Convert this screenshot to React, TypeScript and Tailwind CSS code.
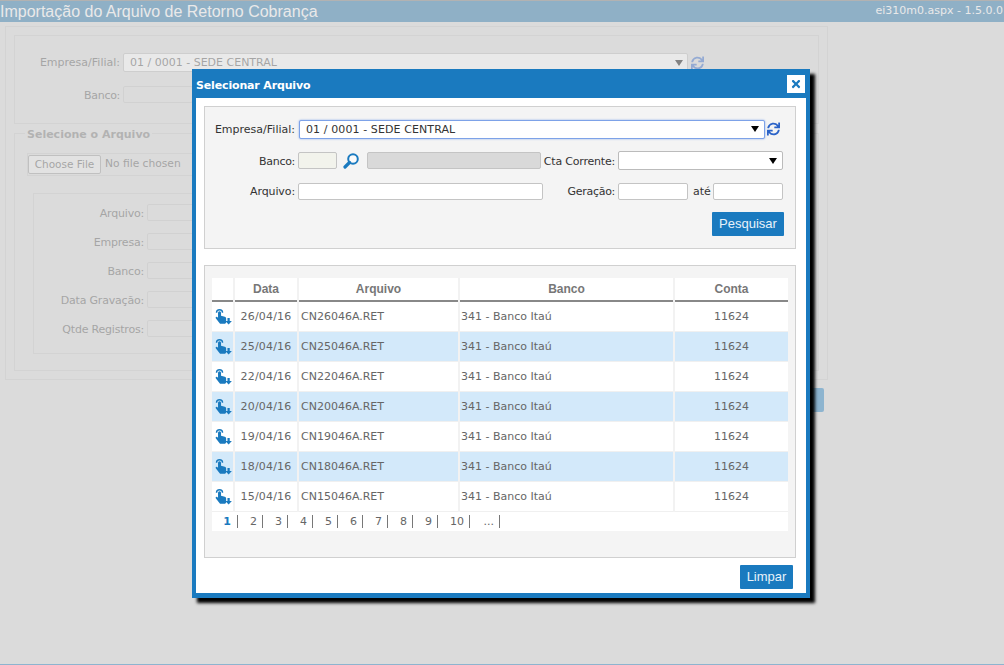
import { FaSync, FaTimes } from "react-icons/fa";

const rows = [
  { data: "26/04/16", arquivo: "CN26046A.RET" },
  { data: "25/04/16", arquivo: "CN25046A.RET" },
  { data: "22/04/16", arquivo: "CN22046A.RET" },
  { data: "20/04/16", arquivo: "CN20046A.RET" },
  { data: "19/04/16", arquivo: "CN19046A.RET" },
  { data: "18/04/16", arquivo: "CN18046A.RET" },
  { data: "15/04/16", arquivo: "CN15046A.RET" },
];

const pages = ["1", "2", "3", "4", "5", "6", "7", "8", "9", "10", "..."];

const caret = "w-0 h-0 border-x-[4px] border-x-transparent border-t-[6px] border-t-black";

function HandIcon() {
  return (
    <svg viewBox="0 0 18 18" className="w-[17px] h-[17px] block" fill="#1a7abf">
      <path d="M1.600 5a3.200 3.200 0 0 1 6.400 0" fill="none" stroke="#1a7abf" strokeWidth="1.500" />
      <path d="M3.200 5a1.600 1.600 0 0 1 3.200 0v3.100l4 1.200c.9 .3 1.400 1 1.400 2v3.500c0 1.200-.8 2-2 2H6.300c-.7 0-1.200-.3-1.600-.9L.8 10.900c-.5-.9.5-2.100 1.500-1.400l.9 .7z" />
      <path d="M13.200 10.500h2.400v3.200h2.300l-3.500 3.900-3.500-3.900h2.300z" />
    </svg>
  );
}

function SearchIcon() {
  return (
    <svg viewBox="0 0 16 16" className="w-4 h-4 block">
      <circle cx="10" cy="6" r="4.800" fill="#fff" fillOpacity="0.5" stroke="#1a7abf" strokeWidth="2" />
      <path d="M6.500 9.500L2 14" stroke="#1a7abf" strokeWidth="3.200" strokeLinecap="round" />
    </svg>
  );
}

function Field({ className }: { className: string }) {
  return <div className={`border border-[#c4c4c4] rounded-[2px] ${className}`} />;
}

function Background() {
  return (
    <div className="h-[665px] bg-[#dbdbdb] border-b border-[#1a7abf] text-[#555] text-[11px]">
      <div className="h-[22px] bg-[#1f70a8] border-t border-[#777] flex items-center justify-between text-white pr-[1px]">
        <span className="font-['Liberation_Sans',sans-serif] text-[16px] leading-none">Importação do Arquivo de Retorno Cobrança</span>
        <span className="text-[11px]">ei310m0.aspx - 1.5.0.0</span>
      </div>
      <div className="mt-1 ml-[5px] w-[823px] h-[354px] border border-[#c8c8c8] pt-2 px-2">
        <div className="h-[89px] border border-[#c8c8c8] pt-[17px]">
          <div className="flex items-center">
            <span className="w-[105px] text-right pt-[2px]">Empresa/Filial:</span>
            <div className="ml-[3px] w-[565px] h-[19px] border border-[#bbb] rounded-[2px] pl-[6px] bg-white flex items-center justify-between pr-1">
              <span className="pt-[2px]">01 / 0001 - SEDE CENTRAL</span>
              <span className={caret} />
            </div>
            <FaSync className="ml-[3px] w-[13px] h-[14px] text-[#2b63c8]" />
          </div>
          <div className="flex items-center mt-[13px]">
            <span className="w-[105px] text-right pt-[3px] tracking-[-0.300px]">Banco:</span>
            <Field className="ml-[3px] w-[70px] h-[17px] bg-[#ddd]" />
          </div>
        </div>
        <div className="relative mt-[9px] h-[238px] border border-[#c8c8c8] pt-[19px] px-3">
          <span className="absolute left-[10px] top-[-7px] bg-[#dbdbdb] px-[2px] font-bold text-[#777]">Selecione o Arquivo</span>
          <div className="h-[23px] border border-[#c8c8c8] flex items-center gap-1">
            <div className="h-[19px] w-[73px] border border-[#999] rounded-[2px] bg-[#eee] flex items-center justify-center text-[10.500px]">Choose File</div>
            <span className="text-[10.700px]">No file chosen</span>
          </div>
          <div className="mt-[17px] h-[161px] border border-[#c8c8c8] pt-[10px] ml-[6px] flex flex-col gap-[12px]">
            {["Arquivo:", "Empresa:", "Banco:", "Data Gravação:", "Qtde Registros:"].map((l) => (
              <div key={l} className="flex items-center h-[17px]">
                <span className="w-[110px] text-right pt-[3px] whitespace-nowrap tracking-[-0.200px]">{l}</span>
                <Field className="ml-[3px] w-[300px] h-[17px] bg-[#ddd]" />
              </div>
            ))}
          </div>
        </div>
      </div>
      <div className="mt-2 ml-[750px] w-[74px] h-6 bg-[#1a7abf] rounded-[2px]" />
    </div>
  );
}

function SearchPanel() {
  return (
    <div className="h-[143px] bg-[#f4f4f4] border border-[#d0d0d0] pt-[12px] pl-[1px] text-[#333]">
      <div className="flex items-center h-[20px]">
        <span className="w-[89px] text-right pt-[2px]">Empresa/Filial:</span>
        <div className="ml-[4px] w-[466px] h-[19px] bg-white border border-[#7da2e8] rounded-[2px] shadow-[0_0_2px_#7da2e8] flex items-center justify-between pl-[6px] pr-[5px]">
          <span className="pt-[2px] tracking-[0.100px]">01 / 0001 - SEDE CENTRAL</span>
          <span className={caret} />
        </div>
        <FaSync className="ml-[2px] w-[13px] h-[14px] text-[#2b63c8]" />
      </div>
      <div className="flex items-center h-[19px] mt-[12px]">
        <span className="w-[89px] text-right pt-[3px] tracking-[-0.300px]">Banco:</span>
        <Field className="ml-[3px] w-[39px] h-[17px] bg-[#f2f3ec]" />
        <span className="ml-[6px]"><SearchIcon /></span>
        <Field className="ml-[8px] w-[174px] h-[17px] bg-[#d9d9d9]" />
        <span className="ml-[1px] w-[73px] text-right pt-[3px] whitespace-nowrap tracking-[-0.200px]">Cta Corrente:</span>
        <div className="ml-[3px] w-[165px] h-[19px] bg-white border border-[#bbb] rounded-[2px] flex items-center justify-end pr-[5px]">
          <span className={caret} />
        </div>
      </div>
      <div className="flex items-center h-[18px] mt-[12px]">
        <span className="w-[89px] text-right pt-[2px] tracking-[-0.100px]">Arquivo:</span>
        <Field className="ml-[3px] w-[245px] h-[17px] bg-white" />
        <span className="w-[72px] text-right pt-[2px] tracking-[-0.300px]">Geração:</span>
        <Field className="ml-[3px] w-[70px] h-[17px] bg-white" />
        <span className="ml-[5px] w-[20px] text-left pt-[2px]">até</span>
        <Field className="w-[70px] h-[17px] bg-white" />
      </div>
      <div className="flex justify-end mt-[12px] pr-[11px]">
        <button className="w-[72px] h-6 bg-[#1a7abf] rounded-[1px] text-[#e8f2fa] text-[13px] font-['Liberation_Sans',sans-serif]">Pesquisar</button>
      </div>
    </div>
  );
}

function ResultGrid() {
  return (
    <div className="mt-4 h-[293px] bg-[#f4f4f4] border border-[#d0d0d0] pt-[12px] px-[7px]">
      <table className="w-[576px] table-fixed border-collapse bg-white text-[#666]">
        <colgroup>
          <col className="w-[22px]" />
          <col className="w-[64px]" />
          <col className="w-[161px]" />
          <col className="w-[215px]" />
          <col className="w-[114px]" />
        </colgroup>
        <thead>
          <tr className="h-[23px] border-b-2 border-[#888] text-[#777] text-[12px] font-['Liberation_Sans',sans-serif]">
            <th className="border-r-2 border-[#f2f2f2]"></th>
            <th className="border-r-2 border-[#f2f2f2] font-bold">Data</th>
            <th className="border-r-2 border-[#f2f2f2] font-bold">Arquivo</th>
            <th className="border-r-2 border-[#f2f2f2] font-bold">Banco</th>
            <th className="font-bold">Conta</th>
          </tr>
        </thead>
        <tbody>
          {rows.map((r, i) => (
            <tr key={r.arquivo} className={`h-[30px] border-b border-[#f0f0f0] ${i % 2 ? "bg-[#d3e9fa]" : "bg-white"}`}>
              <td className="border-r-2 border-[#f2f2f2] pl-[3px]"><HandIcon /></td>
              <td className="border-r-2 border-[#f2f2f2] text-center pt-[2px] tracking-[0.200px]">{r.data}</td>
              <td className="border-r-2 border-[#f2f2f2] pl-[2px] pt-[2px]">{r.arquivo}</td>
              <td className="border-r-2 border-[#f2f2f2] pl-[1px] pt-[2px]">341 - Banco Itaú</td>
              <td className="text-center pt-[2px]">11624</td>
            </tr>
          ))}
          <tr className="h-[20px]">
            <td colSpan={5}>
              <div className="flex pl-[1px]">
                {pages.map((p, i) => (
                  <span
                    key={p}
                    className={`pr-[5px] border-r border-[#777] leading-[13px] text-right ${p === "10" ? "w-[32px]" : p === "..." ? "w-[30px]" : "w-[25px]"} ${i === 0 ? "text-[#1a7abf] font-bold pr-[6px]" : ""}`}
                  >
                    {p}
                  </span>
                ))}
              </div>
            </td>
          </tr>
        </tbody>
      </table>
    </div>
  );
}

export default function App() {
  return (
    <div className="relative h-[665px] w-[1004px] overflow-hidden font-['DejaVu_Sans',sans-serif] text-[11px]">
      <Background />
      <div className="absolute inset-0 bg-[#dbdbdb]/60" />
      <div className="absolute left-[192px] top-[69px] w-[618px] h-[529px] bg-white border-x-4 border-b-[5px] border-[#1a7abf] shadow-[5px_5px_3px_#000]">
        <div className="h-[29px] bg-[#1a7abf] flex items-start justify-between pr-[1px]">
          <span className="mt-[9px] font-bold text-white text-[11px] tracking-[-0.150px]">Selecionar Arquivo</span>
          <span className="mt-[6px] w-[18px] h-[18px] bg-white flex items-center justify-center">
            <FaTimes className="w-3 h-3 text-[#1a7abf]" />
          </span>
        </div>
        <div className="pt-2 pl-2 pr-[10px]">
          <SearchPanel />
          <ResultGrid />
        </div>
        <div className="flex justify-end mt-[7px] pr-[13px]">
          <button className="w-[53px] h-6 bg-[#1a7abf] rounded-[1px] text-[#e8f2fa] text-[13px] font-['Liberation_Sans',sans-serif]">Limpar</button>
        </div>
      </div>
    </div>
  );
}
